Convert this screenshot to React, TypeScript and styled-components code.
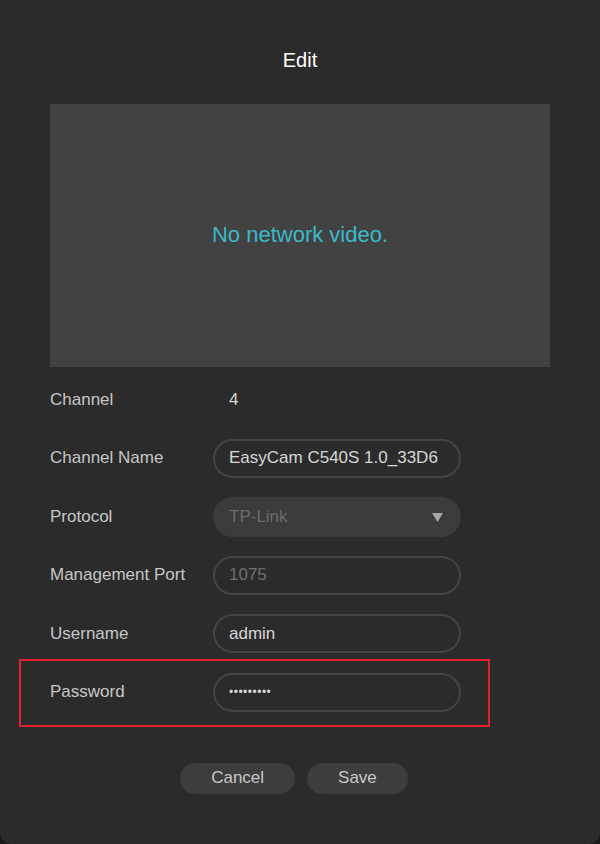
import React from "react";
import styled, { createGlobalStyle } from "styled-components";

const GlobalStyle = createGlobalStyle`
  html, body {
    margin: 0;
    padding: 0;
    background: #1a1a1a;
  }
  body {
    font-family: "Liberation Sans", Arial, sans-serif;
  }
`;

const Dialog = styled.div`
  width: 600px;
  height: 844px;
  box-sizing: border-box;
  background: #2b2b2b;
  border-radius: 0 0 12px 12px;
  padding: 0 50px;
  display: flex;
  flex-direction: column;
`;

const Title = styled.h2`
  margin: 0;
  height: 104px;
  display: flex;
  align-items: center;
  justify-content: center;
  padding-top: 16px;
  box-sizing: border-box;
  font-size: 20px;
  font-weight: normal;
  color: #ffffff;
`;

const Video = styled.div`
  height: 262px;
  background: #424242;
  display: flex;
  align-items: center;
  justify-content: center;
  color: #3cb8ca;
  font-size: 22px;
  padding-bottom: 1px;
`;

const Form = styled.div`
  display: flex;
  flex-direction: column;
  gap: 19.6px;
  margin-top: 13px;
`;

const Row = styled.div<{ $highlight?: boolean }>`
  display: grid;
  grid-template-columns: 163px 248px;
  align-items: center;
  height: 39px;
  position: relative;
  ${p =>
    p.$highlight &&
    `
    &::before {
      content: "";
      position: absolute;
      left: -31px;
      right: 60px;
      top: -14px;
      bottom: -15px;
      border: 2px solid #e3202b;
    }
  `}
`;

const Label = styled.span`
  font-size: 17px;
  color: #c6c6c6;
`;

const Value = styled.span`
  font-size: 17px;
  color: #d6d6d6;
  padding-left: 16px;
`;

const TextInput = styled.input<{ $disabled?: boolean }>`
  box-sizing: border-box;
  width: 248px;
  height: 39px;
  border: 2px solid #444444;
  border-radius: 20px;
  background: #2b2b2b;
  padding: 0 14px;
  font-family: "Liberation Sans", Arial, sans-serif;
  font-size: 17px;
  color: ${p => (p.$disabled ? "#6f6f6f" : "#d6d6d6")};
  outline: none;
  &[type="password"] {
    font-size: 12px;
    letter-spacing: 0.5px;
    color: #d6d6d6;
  }
`;

const Select = styled.div`
  box-sizing: border-box;
  width: 248px;
  height: 40px;
  border-radius: 20px;
  background: #3b3b3b;
  display: flex;
  align-items: center;
  justify-content: space-between;
  padding: 0 18px 0 16px;
  font-size: 17px;
  color: #6c6c6c;
`;

const Caret = styled.svg`
  width: 11px;
  height: 9px;
  display: block;
`;

const Actions = styled.div`
  display: flex;
  justify-content: center;
  gap: 12px;
  margin-top: 51px;
  padding-right: 12px;
`;

const Button = styled.button`
  height: 31px;
  padding: 0 31px;
  border: none;
  border-radius: 16px;
  background: #3d3d3d;
  color: #c8c8c8;
  font-family: "Liberation Sans", Arial, sans-serif;
  font-size: 17px;
  cursor: pointer;
`;

export default function App() {
  return (
    <>
      <GlobalStyle />
      <Dialog>
        <Title>Edit</Title>
        <Video>No network video.</Video>
        <Form>
          <Row>
            <Label>Channel</Label>
            <Value>4</Value>
          </Row>
          <Row>
            <Label>Channel Name</Label>
            <TextInput readOnly value="EasyCam C540S 1.0_33D6" />
          </Row>
          <Row>
            <Label>Protocol</Label>
            <Select>
              <span>TP-Link</span>
              <Caret viewBox="0 0 11 9">
                <path d="M0 0 L11 0 L5.5 9 Z" fill="#a8a8a8" />
              </Caret>
            </Select>
          </Row>
          <Row>
            <Label>Management Port</Label>
            <TextInput readOnly $disabled value="1075" />
          </Row>
          <Row>
            <Label>Username</Label>
            <TextInput readOnly value="admin" />
          </Row>
          <Row $highlight>
            <Label>Password</Label>
            <TextInput readOnly type="password" value="123456789" />
          </Row>
        </Form>
        <Actions>
          <Button>Cancel</Button>
          <Button>Save</Button>
        </Actions>
      </Dialog>
    </>
  );
}
